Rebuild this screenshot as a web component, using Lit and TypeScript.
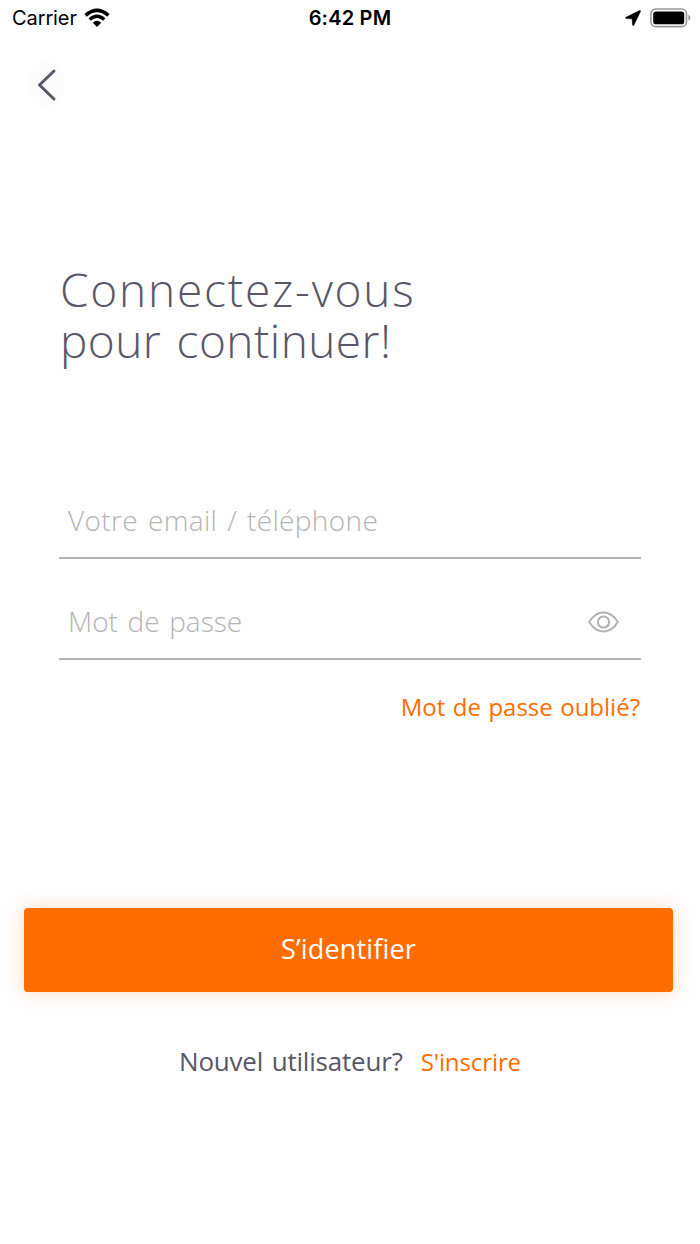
import { LitElement, html, css } from "lit";
import { customElement } from "lit/decorators.js";

@customElement("app-root")
export class AppRoot extends LitElement {
  static styles = css`
    :host {
      display: flex;
      flex-direction: column;
      box-sizing: border-box;
      width: 700px;
      height: 1244px;
      overflow: hidden;
      background: #fefefe;
      color: #595767;
      font-family: "Open Sans", "Noto Sans", sans-serif;
      font-weight: 300;
      white-space: nowrap;
    }
    svg { display: block; flex: none; }
    .status {
      display: grid;
      grid-template-columns: 1fr auto 1fr;
      align-items: center;
      height: 36px;
      padding: 0 9px 0 12px;
      font-family: Inter, sans-serif;
      font-size: 20px;
      color: #000;
    }
    .left, .right { display: flex; align-items: center; }
    .left { gap: 7px; font-weight: 400; letter-spacing: -0.1px; }
    .right { justify-content: flex-end; gap: 9px; }
    .time { margin-right: 3px; font-weight: 600; letter-spacing: 0.2px; }
    .back {
      display: flex;
      width: 40px;
      height: 48px;
      margin: 24px 0 0 26px;
      padding: 0;
      border: 0;
      background: none;
    }
    h1 {
      margin: 156px 0 0 60px;
      font-size: 46px;
      line-height: 51px;
      font-weight: 300;
      letter-spacing: 0.45px;
      word-spacing: 3px;
    }
    h1::first-line { letter-spacing: 1.8px; }
    .fields { margin: 119px 59px 0 59px; }
    .field {
      display: flex;
      align-items: center;
      justify-content: space-between;
      box-sizing: border-box;
      height: 74px;
      padding: 0 22px 0 9px;
      border-bottom: 2px solid #b2b2b2;
      font-size: 28px;
      color: #b4b4b4;
    }
    .field + .field { margin-top: 27px; }
    .field span { padding-bottom: 2px; }
    .f1 { letter-spacing: 0.35px; word-spacing: 2.3px; }
    .f2 { letter-spacing: 0; word-spacing: 2.3px; }
    .forgot {
      margin: 30px 60px 0 0;
      text-align: right;
      font-size: 24px;
      line-height: 34px;
      font-weight: 400;
      letter-spacing: 0;
      word-spacing: 1.2px;
      color: #ff6d00;
    }
    .submit {
      display: flex;
      align-items: center;
      justify-content: center;
      width: 649px;
      height: 84px;
      margin: 184px 0 0 24px;
      padding: 0 0 4px;
      border: 0;
      border-radius: 4px;
      background: #ff6d00;
      box-shadow: 0 0 20px rgba(255, 109, 0, 0.22);
      color: #fff;
      font: 400 27px "Open Sans", sans-serif;
      letter-spacing: 0.15px;
    }
    .signup {
      display: flex;
      align-items: baseline;
      justify-content: center;
      gap: 18px;
      margin-top: 51px;
      line-height: 36px;
      font-weight: 400;
    }
    .ask { font-size: 26px; letter-spacing: -0.2px; word-spacing: 2px; }
    .join { font-size: 24px; letter-spacing: -0.1px; color: #ff6d00; }
  `;

  render() {
    return html`
      <div class="status">
        <div class="left">
          <span>Carrier</span>
          <svg width="26" height="20" viewBox="0 0 26 20">
            <g fill="none" stroke="#000" stroke-width="3.6">
              <path d="M1.6 7.3Q13-2.7 24.4 7.3" />
              <path d="M5.7 11.5Q13 5 20.3 11.5" stroke-width="3.4" />
            </g>
            <path d="M8.8 14.7Q13 11 17.2 14.7L13 19Z" />
          </svg>
        </div>
        <span class="time">6:42 PM</span>
        <div class="right">
          <svg width="16" height="16" viewBox="0 0 16 16">
            <path d="M14.6.5.9 7.3q-1.1.9.3 1.3l5.9.2.4 6q.3 1.5 1.3.4L15.5 1.4q.3-1-.9-.9Z" stroke="#000" stroke-width=".5" />
          </svg>
          <svg width="41" height="20" viewBox="0 0 41 20">
            <rect x=".9" y="1" width="35.6" height="17.6" rx="4.8" fill="none" stroke="#9b9b9b" stroke-width="1.6" />
            <rect x="3.2" y="3.4" width="31" height="12.9" rx="2.6" />
            <path d="M38.3 6.8q2.2 1 2.2 3t-2.2 3Z" fill="#9b9b9b" />
          </svg>
        </div>
      </div>

      <button class="back" aria-label="Retour">
        <svg width="40" height="48" viewBox="0 0 40 48">
          <ellipse cx="20" cy="24" rx="18" ry="23" fill="#fcfcfd" />
          <path d="M28 11 13.5 25 28 39" fill="none" stroke="#595767" stroke-width="3" stroke-linecap="round" stroke-linejoin="round" />
        </svg>
      </button>

      <h1>Connectez-vous<br />pour continuer!</h1>

      <div class="fields">
        <div class="field"><span class="f1">Votre email / téléphone</span></div>
        <div class="field">
          <span class="f2">Mot de passe</span>
          <svg width="31" height="22" viewBox="0 0 31 22" fill="none" stroke="#b2b2b2" stroke-width="2">
            <path d="M1.2 11Q7 1.5 15.5 1.5T29.8 11Q24 20.5 15.5 20.5T1.2 11Z" stroke-linejoin="round" />
            <circle cx="15.5" cy="11" r="5.6" />
          </svg>
        </div>
      </div>

      <div class="forgot">Mot de passe oublié?</div>
      <button class="submit">S’identifier</button>
      <div class="signup"><span class="ask">Nouvel utilisateur?</span><span class="join">S'inscrire</span></div>
    `;
  }
}
